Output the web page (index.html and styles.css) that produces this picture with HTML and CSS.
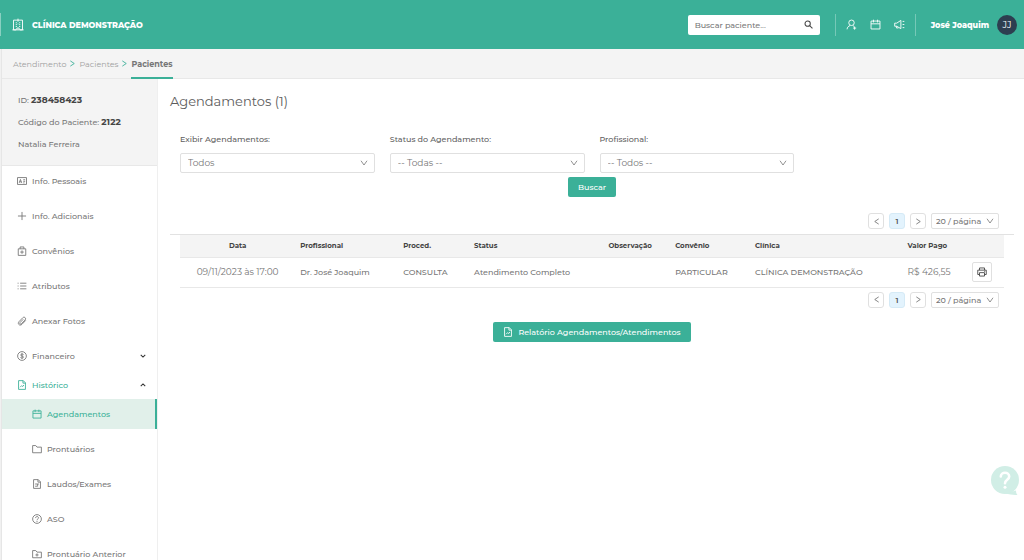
FILE: index.html
```html
<!DOCTYPE html>
<html lang="pt-BR">
<head>
<meta charset="utf-8">
<meta name="viewport" content="width=device-width, initial-scale=1">
<title>Agendamentos</title>
<link rel="stylesheet" href="styles.css">
</head>
<body>
<svg class="sprite" aria-hidden="true">
  <symbol id="i-down" viewBox="0 0 16 16"><path d="M2 3.500l6 8.500 6-8.500"/></symbol>
  <symbol id="i-left" viewBox="0 0 16 16"><path d="M13 2L4 8l9 6"/></symbol>
  <symbol id="i-right" viewBox="0 0 16 16"><path d="M3 2l9 6-9 6"/></symbol>
  <symbol id="i-calendar" viewBox="0 0 16 16"><path d="M1.500 3h13v11.500h-13zM1.500 7h13M5 1v4M11 1v4"/></symbol>
  <symbol id="i-file" viewBox="0 0 16 16"><path d="M2.500 1h7.500l3.500 3.500V15h-11zM9.500 1v4h4M5 11.500L7.500 9l1.500 1.500L11 8"/></symbol>
</svg>
<header class="topbar">
  <span class="topbar-edge"></span>
  <a class="brand" href="#">
    <svg class="brand-icon" viewBox="0 0 16 18"><path d="M2 2.500h12v13H2zM8 .5v4M.5 15.500h5M10.500 15.500h5M6.500 15.500v-2.500h3v2.500"/><path d="M5 6h1.500M9.500 6H11M5 8.500h1.500M9.500 8.500H11M5 11h1.500M9.500 11H11M7.500 7.500h1"/></svg>
    <span>CLÍNICA DEMONSTRAÇÃO</span>
  </a>
  <form class="search">
    <input type="text" placeholder="Buscar paciente..." aria-label="Buscar paciente">
    <button type="button" aria-label="Pesquisar"><svg viewBox="0 0 16 16"><circle cx="6.500" cy="6.500" r="4.700"/><path d="M10 10l5 5"/></svg></button>
  </form>
  <div class="tools">
    <button type="button" aria-label="Novo paciente"><svg viewBox="0 0 16 16"><circle cx="8" cy="5.500" r="4"/><path d="M1.500 15c.3-3 2-4.700 4.500-5.500M10 9.500l2 1.500M12.500 11v4.500M10.300 13.200h4.500"/></svg></button>
    <button type="button" aria-label="Agenda"><svg><use href="#i-calendar"/></svg></button>
    <button type="button" aria-label="Avisos"><svg viewBox="0 0 16 16"><path d="M1 6v4.500h3L10 14V2L4 6zM3.500 10.500v2.500h3M12.500 3.500h2.500M12.500 8h2.500M12.500 12.500h2.500"/></svg></button>
  </div>
  <button type="button" class="user"><span>José Joaquim</span><span class="avatar">JJ</span></button>
</header>

<div class="layout">
  <div class="rail"></div>
  <nav class="crumbs" aria-label="Navegação">
    <a href="#">Atendimento</a>
    <svg><use href="#i-right"/></svg>
    <a href="#">Pacientes</a>
    <svg><use href="#i-right"/></svg>
    <a href="#" class="current">Pacientes</a>
  </nav>
  <aside class="sidebar">
    <div class="patient">
      <p>ID: <b>238458423</b></p>
      <p>Código do Paciente: <b>2122</b></p>
      <p>Natalia Ferreira</p>
    </div>
    <ul class="menu">
      <li><a href="#"><svg viewBox="0 0 16 16"><path d="M.8 2.500h14.400v11H.8zM3.500 11l2-5.500 2 5.500M4.200 9.300h2.600M10 6h3M10 8.500h3M10 11h2"/></svg>Info. Pessoais</a></li>
      <li><a href="#"><svg viewBox="0 0 16 16"><path d="M8 1.500v13M1.500 8h13"/></svg>Info. Adicionais</a></li>
      <li><a href="#"><svg viewBox="0 0 16 16"><path d="M2 4.500h12V15H2zM5 4.500V1.500h6v3M8 7v5.500M5.200 9.700h5.600"/></svg>Convênios</a></li>
      <li><a href="#"><svg viewBox="0 0 16 16"><path d="M5 3.500h10M5 8h10M5 12.500h10M1 3.500h1.500M1 8h1.500M1 12.500h1.500"/></svg>Atributos</a></li>
      <li><a href="#"><svg viewBox="0 0 16 16"><path d="M14 7l-6 6.200c-3.500 3.500-8-.7-4.800-4.200l6-6.200c2.500-2.500 6.300.8 3.800 3.500l-6 6.100c-1.600 1.500-3.600-.2-2.200-1.900l5.200-5.300"/></svg>Anexar Fotos</a></li>
      <li class="group"><a href="#"><svg viewBox="0 0 16 16"><circle cx="8" cy="8" r="7"/><path d="M10.500 5.800C9.500 4.300 5.800 4.500 5.800 6.500c0 2 4.600 1 4.600 3.200 0 2-3.800 2.200-4.900.6M8 3.500v9"/></svg>Financeiro<svg class="caret" viewBox="0 0 8 8"><path d="M1 2.500l3 3 3-3"/></svg></a></li>
      <li class="group open"><a href="#"><svg><use href="#i-file"/></svg>Histórico<svg class="caret" viewBox="0 0 8 8"><path d="M1 5.500l3-3 3 3"/></svg></a>
        <ul class="submenu">
          <li><a href="#" class="active"><svg><use href="#i-calendar"/></svg>Agendamentos</a></li>
          <li><a href="#"><svg viewBox="0 0 16 16"><path d="M1 2.500h5l2 2.500h7v9H1z"/></svg>Prontuários</a></li>
          <li><a href="#"><svg viewBox="0 0 16 16"><path d="M2.500 1h7.500l3.500 3.500V15h-11zM9.500 1v4h4M5 8h6M5 11.500h3.500M9 8v4"/></svg>Laudos/Exames</a></li>
          <li><a href="#"><svg viewBox="0 0 16 16"><circle cx="8" cy="8" r="7"/><path d="M5.700 6.500c0-3.200 4.700-3.200 4.700-.3C10.400 8 8 8 8 10M8 11.300v1.500"/></svg>ASO</a></li>
          <li><a href="#"><svg viewBox="0 0 16 16"><path d="M1 2.500h5l2 2.500h7v9H1zM8 7v5M5.500 9.500h5"/></svg>Prontuário Anterior</a></li>
        </ul>
      </li>
    </ul>
  </aside>

  <main class="main">
    <h1>Agendamentos (1)</h1>
    <form class="filters">
      <div class="field"><label for="f1">Exibir Agendamentos:</label>
        <div class="select"><select id="f1"><option>Todos</option></select><svg><use href="#i-down"/></svg></div></div>
      <div class="field"><label for="f2">Status do Agendamento:</label>
        <div class="select"><select id="f2"><option>-- Todas --</option></select><svg><use href="#i-down"/></svg></div></div>
      <div class="field"><label for="f3">Profissional:</label>
        <div class="select"><select id="f3"><option>-- Todos --</option></select><svg><use href="#i-down"/></svg></div></div>
    </form>
    <div class="center"><button type="button" class="primary">Buscar</button></div>

    <div class="pager pager-top">
      <button type="button" aria-label="Anterior"><svg><use href="#i-left"/></svg></button>
      <button type="button" class="on">1</button>
      <button type="button" aria-label="Próxima"><svg><use href="#i-right"/></svg></button>
      <div class="select small"><select aria-label="Itens por página"><option>20 / página</option></select><svg><use href="#i-down"/></svg></div>
    </div>

    <div class="results">
      <table>
        <thead>
          <tr><th class="c-date">Data</th><th class="c-prof">Profissional</th><th class="c-proc">Proced.</th><th class="c-status">Status</th><th class="c-obs">Observação</th><th class="c-conv">Convênio</th><th class="c-clinic">Clínica</th><th class="c-value">Valor Pago</th><th class="c-act"></th></tr>
        </thead>
        <tbody>
          <tr><td class="c-date">09/11/2023 às 17:00</td><td>Dr. José Joaquim</td><td>CONSULTA</td><td>Atendimento Completo</td><td></td><td>PARTICULAR</td><td>CLÍNICA DEMONSTRAÇÃO</td><td class="c-value">R$ 426,55</td>
          <td class="c-act"><button type="button" class="print" aria-label="Imprimir"><svg viewBox="0 0 16 16"><path d="M4 5V1.500h8V5M4 12H1.200V5h13.600v7H12M4 9h8v5.500H4zM11.500 7h1.500"/></svg></button></td></tr>
        </tbody>
      </table>
    </div>

    <div class="pager">
      <button type="button" aria-label="Anterior"><svg><use href="#i-left"/></svg></button>
      <button type="button" class="on">1</button>
      <button type="button" aria-label="Próxima"><svg><use href="#i-right"/></svg></button>
      <div class="select small"><select aria-label="Itens por página"><option>20 / página</option></select><svg><use href="#i-down"/></svg></div>
    </div>
    <div class="center report"><button type="button" class="primary"><svg><use href="#i-file"/></svg>Relatório Agendamentos/Atendimentos</button></div>
  </main>
</div>

<button type="button" class="help" aria-label="Ajuda"><svg viewBox="0 0 28 30"><circle class="bubble" cx="14" cy="14" r="14"/><path class="bubble" d="M14 27.500c5 .5 8.500 2 12.500 1.300-1-.8-1.500-2-1.500-4.300z"/><path class="mark" d="M9.800 10.500c0-5 8.400-5 8.400 0 0 3.200-4.200 3.200-4.200 6.700"/><circle class="dot" cx="14" cy="21.300" r="1.500"/></svg></button>
</body>
</html>
```
FILE: styles.css
```css
* { box-sizing: border-box; }

:root {
  --green: #3bb098;
  --grey: #f4f4f4;
  --line: #e8e8e8;
  --border: #e0e0e0;
  --text: #767676;
}

body {
  margin: 0;
  height: 100vh;
  display: flex;
  flex-direction: column;
  overflow: hidden;
  background: #fff;
  color: var(--text);
  font: 500 8px/14px Montserrat, Inter, sans-serif;
}

button, input, select { font: inherit; color: inherit; margin: 0; padding: 0; border: 0; background: none; }
button { cursor: pointer; }
a { color: inherit; text-decoration: none; }
ul { list-style: none; margin: 0; padding: 0; }
p { margin: 0; }

svg {
  width: 10px;
  height: 10px;
  flex: none;
  display: block;
  fill: none;
  stroke: currentColor;
  stroke-width: 1.4;
}

.sprite { position: absolute; width: 0; height: 0; }

/* Top bar */
.topbar {
  flex: none;
  height: 49px;
  display: flex;
  align-items: center;
  padding-right: 7px;
  background: var(--green);
  color: #fff;
}
.topbar-edge { width: 1px; height: 23px; background: #89d0c1; }
.brand { display: flex; align-items: center; gap: 8px; margin: 0 auto 0 11px; font-weight: 800; }
.brand-icon { width: 12px; height: 14px; stroke-width: 1.2; }

.search {
  width: 132px;
  height: 20px;
  display: flex;
  align-items: center;
  padding: 0 7px;
  border-radius: 2px;
  background: #fff;
  color: #444;
}
.search input { flex: 1; min-width: 0; outline: 0; }
.search input::placeholder { color: #777; opacity: 1; }
.search svg { width: 9px; height: 9px; stroke-width: 1.8; }

.tools {
  height: 22px;
  display: flex;
  align-items: center;
  gap: 13px;
  margin-left: 15px;
  padding: 0 10px;
  border-left: 1px solid #76c8b7;
  border-right: 1px solid #76c8b7;
}
.tools svg { width: 11px; height: 11px; stroke-width: 1.3; }
.user { display: flex; align-items: center; gap: 8px; margin-left: 15px; font-weight: 800; }
.avatar {
  width: 20px;
  height: 20px;
  border-radius: 50%;
  background: #2d3e50;
  font-size: 9px;
  font-weight: 400;
  line-height: 20px;
}

/* Page frame */
.layout {
  flex: 1;
  min-height: 0;
  display: grid;
  grid-template-columns: 2px 156px 1fr;
  grid-template-rows: 30px minmax(0, 1fr);
}
.rail { grid-row: 1 / 3; background: #f1f1f1; border-right: 1px solid #e6e6e6; }

.crumbs {
  grid-column: 2 / 4;
  display: flex;
  align-items: center;
  gap: 3px;
  padding-left: 11px;
  background: var(--grey);
  border-bottom: 1px solid var(--line);
  color: #a0a0a0;
  font-weight: 400;
}
.crumbs svg { width: 7px; height: 7px; color: var(--green); stroke-width: 2; }
.crumbs a { line-height: 26px; border-top: 2px solid transparent; border-bottom: 2px solid transparent; }
.crumbs .current { color: #777; font-weight: 700; border-bottom-color: var(--green); }

/* Sidebar */
.sidebar { overflow-y: auto; scrollbar-width: none; border-right: 1px solid #efefef; }
.patient {
  display: grid;
  gap: 8px;
  padding: 14px 16px 14px;
  background: var(--grey);
  border-bottom: 1px solid var(--line);
}
.patient b { color: #444; font-size: 9px; }
.menu > li { margin-bottom: 5px; }
.menu a { height: 30px; display: flex; align-items: center; gap: 5px; padding-left: 15px; }
.menu > .group { margin: 0; }
.menu > .group > a { height: 29px; }
.menu .caret { width: 6px; height: 6px; margin: 0 11px 0 auto; color: #333; }
.menu > .open > a { color: var(--green); }
.submenu { display: grid; gap: 5px; }
.submenu a { padding-left: 30px; }
.submenu .active { background: #e1f0ea; color: var(--green); border-right: 2px solid var(--green); }

/* Content */
.main { min-width: 0; overflow-y: auto; padding: 13px 10px 12px 12px; }
h1 { margin: 0 0 20px; font-size: 13px; line-height: 18px; font-weight: 400; color: #5c5c5c; }

.filters { display: grid; grid-template-columns: repeat(4, 1fr); gap: 15px; padding: 0 10px; }
.filters label { display: block; padding: 2px 0 7px; color: #606060; }

.select { position: relative; }
.select select {
  display: block;
  width: 100%;
  height: 20px;
  padding: 0 18px 0 7px;
  border: 1px solid var(--border);
  border-radius: 2px;
  appearance: none;
  background: #fff;
  font-size: 9px;
  font-weight: 400;
}
.select svg { position: absolute; right: 7px; top: 6px; width: 8px; height: 8px; pointer-events: none; stroke-width: 1.6; }
.select.small select { width: 68px; height: 16px; padding: 0 12px 0 4px; font-size: 8px; font-weight: 500; }
.select.small svg { right: 5px; top: 4px; }

.center { display: flex; justify-content: center; padding-top: 4px; }
.primary {
  display: flex;
  align-items: center;
  gap: 5px;
  height: 20px;
  padding: 0 10px;
  border-radius: 2px;
  background: var(--green);
  color: #fff;
}

.pager { display: flex; justify-content: flex-end; gap: 5px; padding: 4px 15px 0 0; }
.pager-top { padding: 16px 15px 5px 0; }
.pager button {
  width: 16px;
  height: 16px;
  display: grid;
  place-items: center;
  border: 1px solid var(--border);
  border-radius: 3px;
}
.pager button svg { width: 7px; height: 7px; stroke-width: 2; }
.pager .on { background: #e3f3fd; border-color: #d5eaf6; font-weight: 600; color: #555; }

.results { padding: 0 10px; border-top: 1px solid #e2e2e2; }
table { width: 100%; table-layout: fixed; border-collapse: collapse; }
th, td { padding: 0 0 0 9px; text-align: left; white-space: nowrap; border-bottom: 1px solid var(--line); }
th { height: 22px; background: var(--grey); color: #444; font-size: 7px; font-weight: 700; }
td { height: 30px; }
.c-date { width: 13.5%; padding-left: 4px; text-align: center; }
td.c-date, td.c-value { font-size: 9px; font-weight: 400; }
.c-prof { width: 12.5%; }
.c-proc { width: 8.6%; }
.c-status { width: 16.3%; }
.c-obs { width: 8.1%; }
.c-conv { width: 9.7%; }
.c-clinic { width: 18.5%; }
.c-value { width: 7.5%; }
.c-act { padding: 0; }
.print {
  width: 20px;
  height: 20px;
  display: grid;
  place-items: center;
  margin: 0 auto;
  border: 1px solid var(--border);
  border-radius: 2px;
  color: #444;
}
.report { padding-top: 14px; }

/* Floating help bubble */
.help { position: fixed; right: 5px; bottom: 64px; }
.help svg { width: 28px; height: 30px; }
.help .bubble { fill: #d1eee6; stroke: none; }
.help .mark { stroke: #fff; stroke-width: 2.600; stroke-linecap: round; }
.help .dot { fill: #fff; stroke: none; }
```
